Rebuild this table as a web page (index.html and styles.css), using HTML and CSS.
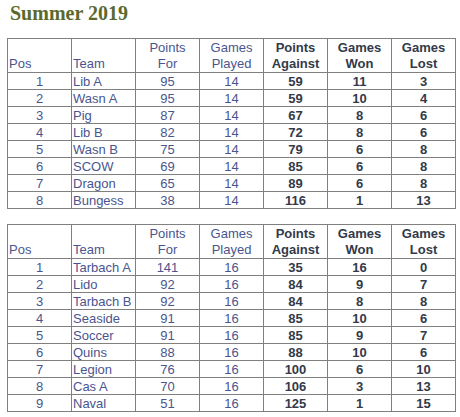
FILE: index.html
```html
<!DOCTYPE html>
<html>
<head>
<meta charset="utf-8">
<link rel="stylesheet" href="styles.css">
</head>
<body>
<div class="page">
  <h1 class="title">Summer 2019</h1>
  <table class="league">
    <thead>
      <tr>
        <th class="lt">Pos</th><th class="lt">Team</th><th class="lt c">Points<br>For</th><th class="lt c">Games<br>Played</th><th class="dk">Points<br>Against</th><th class="dk">Games<br>Won</th><th class="dk">Games<br>Lost</th>
      </tr>
    </thead>
    <tbody>
      <tr><td class="lt c">1</td><td class="lt">Lib A</td><td class="lt c">95</td><td class="lt c">14</td><td class="dk">59</td><td class="dk">11</td><td class="dk">3</td></tr>
      <tr><td class="lt c">2</td><td class="lt">Wasn A</td><td class="lt c">95</td><td class="lt c">14</td><td class="dk">59</td><td class="dk">10</td><td class="dk">4</td></tr>
      <tr><td class="lt c">3</td><td class="lt">Pig</td><td class="lt c">87</td><td class="lt c">14</td><td class="dk">67</td><td class="dk">8</td><td class="dk">6</td></tr>
      <tr><td class="lt c">4</td><td class="lt">Lib B</td><td class="lt c">82</td><td class="lt c">14</td><td class="dk">72</td><td class="dk">8</td><td class="dk">6</td></tr>
      <tr><td class="lt c">5</td><td class="lt">Wasn B</td><td class="lt c">75</td><td class="lt c">14</td><td class="dk">79</td><td class="dk">6</td><td class="dk">8</td></tr>
      <tr><td class="lt c">6</td><td class="lt">SCOW</td><td class="lt c">69</td><td class="lt c">14</td><td class="dk">85</td><td class="dk">6</td><td class="dk">8</td></tr>
      <tr><td class="lt c">7</td><td class="lt">Dragon</td><td class="lt c">65</td><td class="lt c">14</td><td class="dk">89</td><td class="dk">6</td><td class="dk">8</td></tr>
      <tr><td class="lt c">8</td><td class="lt">Bungess</td><td class="lt c">38</td><td class="lt c">14</td><td class="dk">116</td><td class="dk">1</td><td class="dk">13</td></tr>
    </tbody>
  </table>
  <table class="league">
    <thead>
      <tr>
        <th class="lt">Pos</th><th class="lt">Team</th><th class="lt c">Points<br>For</th><th class="lt c">Games<br>Played</th><th class="dk">Points<br>Against</th><th class="dk">Games<br>Won</th><th class="dk">Games<br>Lost</th>
      </tr>
    </thead>
    <tbody>
      <tr><td class="lt c">1</td><td class="lt">Tarbach A</td><td class="lt c">141</td><td class="lt c">16</td><td class="dk">35</td><td class="dk">16</td><td class="dk">0</td></tr>
      <tr><td class="lt c">2</td><td class="lt">Lido</td><td class="lt c">92</td><td class="lt c">16</td><td class="dk">84</td><td class="dk">9</td><td class="dk">7</td></tr>
      <tr><td class="lt c">3</td><td class="lt">Tarbach B</td><td class="lt c">92</td><td class="lt c">16</td><td class="dk">84</td><td class="dk">8</td><td class="dk">8</td></tr>
      <tr><td class="lt c">4</td><td class="lt">Seaside</td><td class="lt c">91</td><td class="lt c">16</td><td class="dk">85</td><td class="dk">10</td><td class="dk">6</td></tr>
      <tr><td class="lt c">5</td><td class="lt">Soccer</td><td class="lt c">91</td><td class="lt c">16</td><td class="dk">85</td><td class="dk">9</td><td class="dk">7</td></tr>
      <tr><td class="lt c">6</td><td class="lt">Quins</td><td class="lt c">88</td><td class="lt c">16</td><td class="dk">88</td><td class="dk">10</td><td class="dk">6</td></tr>
      <tr><td class="lt c">7</td><td class="lt">Legion</td><td class="lt c">76</td><td class="lt c">16</td><td class="dk">100</td><td class="dk">6</td><td class="dk">10</td></tr>
      <tr><td class="lt c">8</td><td class="lt">Cas A</td><td class="lt c">70</td><td class="lt c">16</td><td class="dk">106</td><td class="dk">3</td><td class="dk">13</td></tr>
      <tr><td class="lt c">9</td><td class="lt">Naval</td><td class="lt c">51</td><td class="lt c">16</td><td class="dk">125</td><td class="dk">1</td><td class="dk">15</td></tr>
    </tbody>
  </table>
</div>
</body>
</html>
```
FILE: styles.css
```css
html, body {
  margin: 0;
  padding: 0;
  background: #ffffff;
}
.page {
  padding: 2px 5px 0 7px;
  font-family: "Liberation Sans", Arial, sans-serif;
}
.title {
  margin: 0 0 14px 3px;
  font-family: "Liberation Serif", "Times New Roman", serif;
  font-size: 20px;
  font-weight: bold;
  line-height: 22px;
  color: #5b6a2c;
}
.league {
  border-collapse: collapse;
  table-layout: fixed;
  width: 449px;
  margin-bottom: 15px;
  font-size: 13px;
}
.league th, .league td {
  border: 1px solid #808080;
  padding: 1px 1px 0 1px;
  line-height: 15px;
  overflow: hidden;
  white-space: nowrap;
}
.league th {
  vertical-align: bottom;
  line-height: 16px;
  font-weight: normal;
  text-align: left;
}
.lt {
  color: #4a558f;
  font-weight: normal;
}
.c {
  text-align: center !important;
}
.dk {
  color: #333a4a;
  font-weight: bold !important;
  text-align: center !important;
}
```
